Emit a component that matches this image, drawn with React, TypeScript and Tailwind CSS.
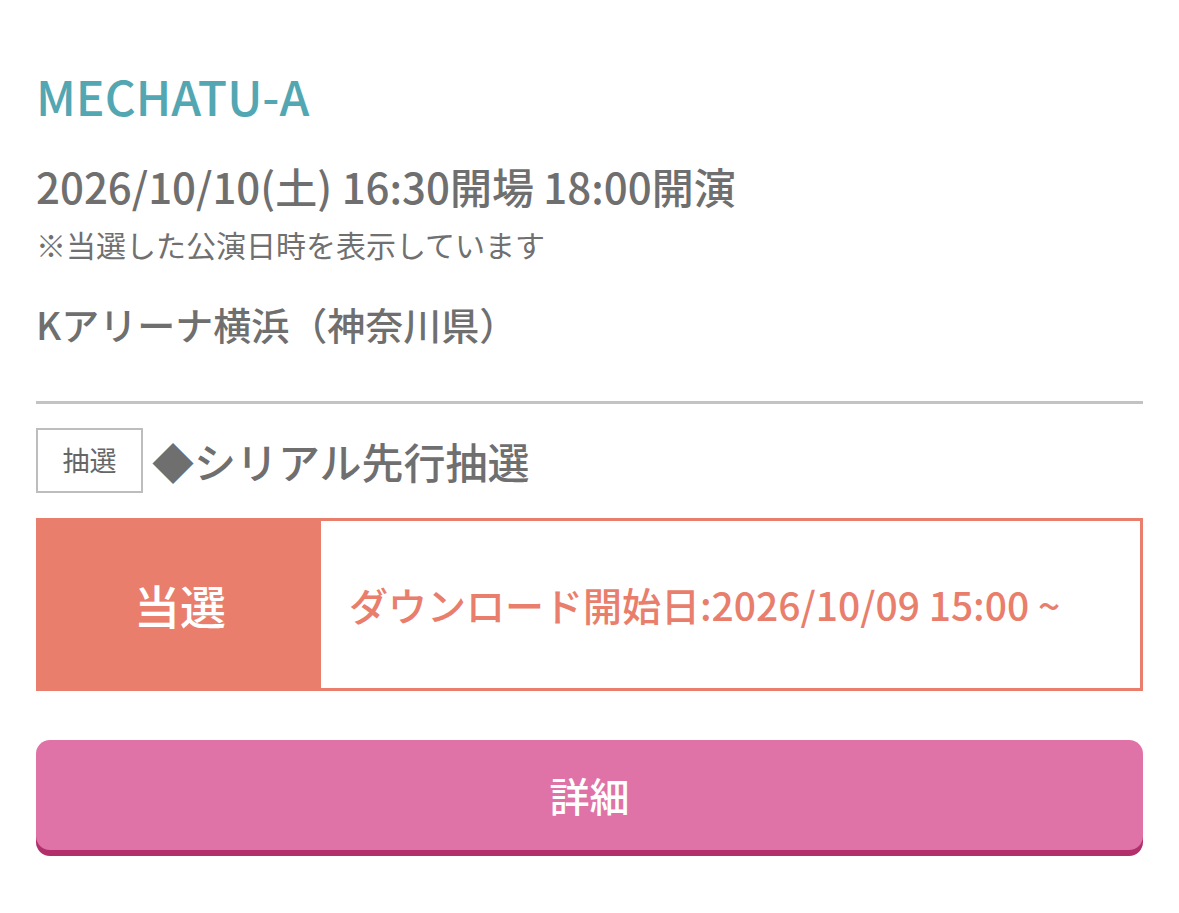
import React from "react";

const font = { fontFamily: '"Noto Sans CJK JP", "Noto Sans", sans-serif' };

const TicketResult = () => {
  return (
    <section className="min-h-screen bg-white px-[36px] pt-[62px] text-[#6f6f6f]" style={font}>
      <h1 className="text-[48px] leading-[66px] font-medium text-[#53a7b2]">MECHATU-A</h1>

      <div className="mt-[32px]">
        <p className="text-[42px] leading-[52px] font-medium">2026/10/10(土) 16:30開場 18:00開演</p>
        <p className="mt-[12px] text-[30px] leading-[40px] text-[#707070]">※当選した公演日時を表示しています</p>
      </div>

      <p className="mt-[34px] text-[38px] leading-[52px] font-medium">Kアリーナ横浜（神奈川県）</p>

      <div className="mt-[51px] h-[3px] bg-[#c3c3c3]" />

      <div className="mt-[24px] flex items-center gap-[9px]">
        <span className="flex h-[65px] w-[107px] items-center justify-center border-2 border-[#bdbdbd] text-[27px] text-[#666]">
          抽選
        </span>
        <span className="text-[42px] leading-[52px] font-medium">◆シリアル先行抽選</span>
      </div>

      <div className="mt-[25px] flex h-[173px] border-[3px] border-[#e87e6b]">
        <div className="flex w-[282px] items-center justify-center bg-[#e87e6b] text-[46px] font-medium text-white">
          当選
        </div>
        <div className="flex flex-1 items-center pl-[28px] text-[39px] font-medium text-[#e87e6b]">
          ダウンロード開始日:2026/10/09 15:00 ~
        </div>
      </div>

      <button className="mt-[49px] flex h-[110px] w-full items-center justify-center rounded-[14px] bg-[#df72a6] text-[40px] font-medium text-white shadow-[0_6px_0_#b1306c]">
        詳細
      </button>
    </section>
  );
};

export default function App() {
  return <TicketResult />;
}
